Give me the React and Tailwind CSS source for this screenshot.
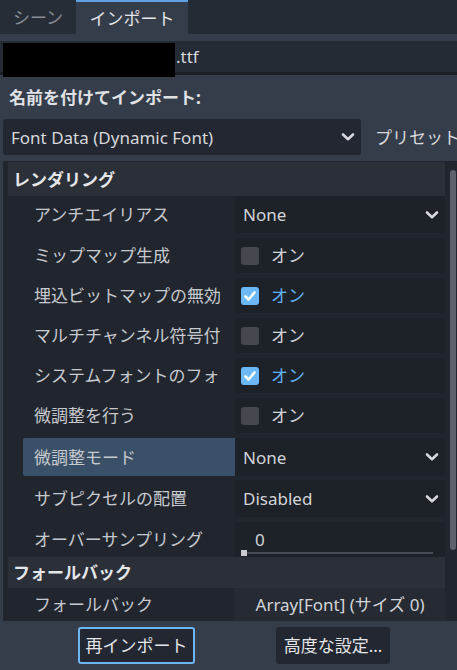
import React from "react";

const FONT = { fontFamily: '"Noto Sans", "Noto Sans CJK JP", sans-serif' };

function Chevron() {
  return (
    <svg width="14" height="10" viewBox="0 0 14 10" className="shrink-0">
      <path d="M2 2.5 L7 7.2 L12 2.5" fill="none" stroke="#d6d8dc" strokeWidth="2.6" strokeLinecap="round" strokeLinejoin="round" />
    </svg>
  );
}

function Check({ on }) {
  if (!on) {
    return <div className="w-[18px] h-[18px] rounded-[3px] bg-[#45484f] shrink-0" />;
  }
  return (
    <div className="w-[18px] h-[18px] rounded-[3px] bg-[#6cb8f6] shrink-0 flex items-center justify-center">
      <svg width="14" height="14" viewBox="0 0 14 14">
        <path d="M2.5 7.5 L5.6 10.5 L11.5 3.5" fill="none" stroke="#ffffff" strokeWidth="2.6" strokeLinecap="round" strokeLinejoin="round" />
      </svg>
    </div>
  );
}

function Row({ label, h, mt, highlight, children }) {
  return (
    <div className={`flex ${h} ${mt}`}>
      <div className={`w-[212px] shrink-0 ml-[15px] pl-[11px] flex items-center text-[#c6c9ce] ${highlight ? "bg-[#3a5068] rounded-l-[2px]" : ""}`}>
        <div className="w-[186px] overflow-hidden whitespace-nowrap">{label}</div>
      </div>
      <div className="flex-1 min-w-0 bg-[#1d2128] rounded-[3px] flex items-center">{children}</div>
    </div>
  );
}

function DropVal({ text }) {
  return (
    <div className="flex items-center justify-between w-full pl-[8px] pr-[6px] text-[#d2d4d8]">
      <span>{text}</span>
      <Chevron />
    </div>
  );
}

function CheckVal({ on }) {
  return (
    <div className="flex items-center pl-[6px] gap-[12px]">
      <Check on={on} />
      <span className={on ? "text-[#62b2f4]" : "text-[#d2d4d8]"}>オン</span>
    </div>
  );
}

export default function App() {
  return (
    <div style={FONT} className="w-[457px] h-[670px] bg-[#363d4a] flex flex-col overflow-hidden text-[17px] leading-none">
      {/* tabs */}
      <div className="h-[34px] bg-[#252b35] flex shrink-0">
        <div className="w-[76px] flex items-center justify-center text-[#8a8f98] bg-[#272d37]">シーン</div>
        <div className="w-[112px] flex items-center justify-center text-[#e2e4e8] bg-[#363d4a] border-t-2 border-[#5f9fe2]">インポート</div>
      </div>
      <div className="h-[7px] shrink-0" />
      {/* filename */}
      <div className="h-[34px] shrink-0 bg-[#252b35] border-b-[3px] border-[#1c2026] flex items-start">
        <div className="w-[172px] h-[34px] bg-black ml-[3px] mt-[2px] shrink-0 relative z-10" />
        <div className="self-center text-[#d6d8dc] ml-[1px]">.ttf</div>
      </div>
      {/* label */}
      <div className="h-[44px] shrink-0 flex items-center pl-[9px] font-bold text-[#dfe1e4]">名前を付けてインポート:</div>
      {/* dropdown */}
      <div className="h-[36px] shrink-0 flex items-center overflow-hidden">
        <div className="ml-[3px] w-[358px] h-[36px] shrink-0 bg-[#222731] rounded-[3px] flex items-center justify-between pl-[8px] pr-[6px] text-[#d6d8dc]">
          <span>Font Data (Dynamic Font)</span>
          <Chevron />
        </div>
        <div className="ml-[14px] shrink-0 whitespace-nowrap text-[#d6d8dc]">プリセット...</div>
      </div>
      {/* inspector */}
      <div className="mt-[6px] ml-[3px] h-[460px] shrink-0 bg-[#21262e] flex">
        <div className="flex-1 min-w-0 pl-[5px] pt-[1px] flex flex-col">
          <div className="h-[34px] bg-[#2a2f38] flex items-center pl-[5px] font-bold text-[#e4e6e9] rounded-t-[2px]">レンダリング</div>
          <Row label="アンチエイリアス" h="h-[37px]" mt="">
            <DropVal text="None" />
          </Row>
          <Row label="ミップマップ生成" h="h-[35px]" mt="mt-[5px]">
            <CheckVal on={false} />
          </Row>
          <Row label="埋込ビットマップの無効" h="h-[35px]" mt="mt-[5px]">
            <CheckVal on={true} />
          </Row>
          <Row label="マルチチャンネル符号付" h="h-[35px]" mt="mt-[5px]">
            <CheckVal on={false} />
          </Row>
          <Row label="システムフォントのフォールバック" h="h-[35px]" mt="mt-[5px]">
            <CheckVal on={true} />
          </Row>
          <Row label="微調整を行う" h="h-[35px]" mt="mt-[5px]">
            <CheckVal on={false} />
          </Row>
          <Row label="微調整モード" h="h-[38px]" mt="mt-[5px]" highlight>
            <DropVal text="None" />
          </Row>
          <Row label="サブピクセルの配置" h="h-[37px]" mt="mt-[4px]">
            <DropVal text="Disabled" />
          </Row>
          <Row label="オーバーサンプリング" h="h-[35px]" mt="mt-[5px]">
            <div className="w-full h-full flex flex-col pl-[6px] pr-[12px]">
              <div className="text-[#d2d4d8] pl-[14px] pt-[9px] h-[20px]">0</div>
              <div className="relative mt-[8px] h-[6px]">
                <div className="absolute left-[3px] right-0 top-[2px] h-[2px] bg-[#474b53]" />
                <div className="absolute left-0 top-0 w-[6px] h-[6px] bg-[#c9cbce]" />
              </div>
            </div>
          </Row>
          <div className="h-[31px] bg-[#2a2f38] flex items-center pl-[5px] font-bold text-[#e4e6e9]">フォールバック</div>
          <div className="flex h-[33px]">
            <div className="w-[212px] shrink-0 ml-[15px] pl-[11px] flex items-center text-[#c6c9ce] whitespace-nowrap">フォールバック</div>
            <div className="flex-1 bg-[#262b33] flex items-center justify-center text-[#d2d4d8] whitespace-nowrap">Array[Font] (サイズ 0)</div>
          </div>
        </div>
        <div className="w-[12px] shrink-0 flex justify-end pt-[9px]">
          <div className="w-[6px] h-[380px] rounded-[3px] bg-[#5d6169] mr-[1px]" />
        </div>
      </div>
      {/* buttons */}
      <div className="mt-[6px] flex pl-[78px]">
        <div className="w-[117px] h-[37px] bg-[#222731] border-2 border-[#6cb6f2] rounded-[3px] flex items-center justify-center text-[#e4e6e9]">再インポート</div>
        <div className="ml-[81px] w-[114px] h-[37px] bg-[#222731] rounded-[3px] flex items-center justify-center text-[#e4e6e9]">高度な設定...</div>
      </div>
    </div>
  );
}
